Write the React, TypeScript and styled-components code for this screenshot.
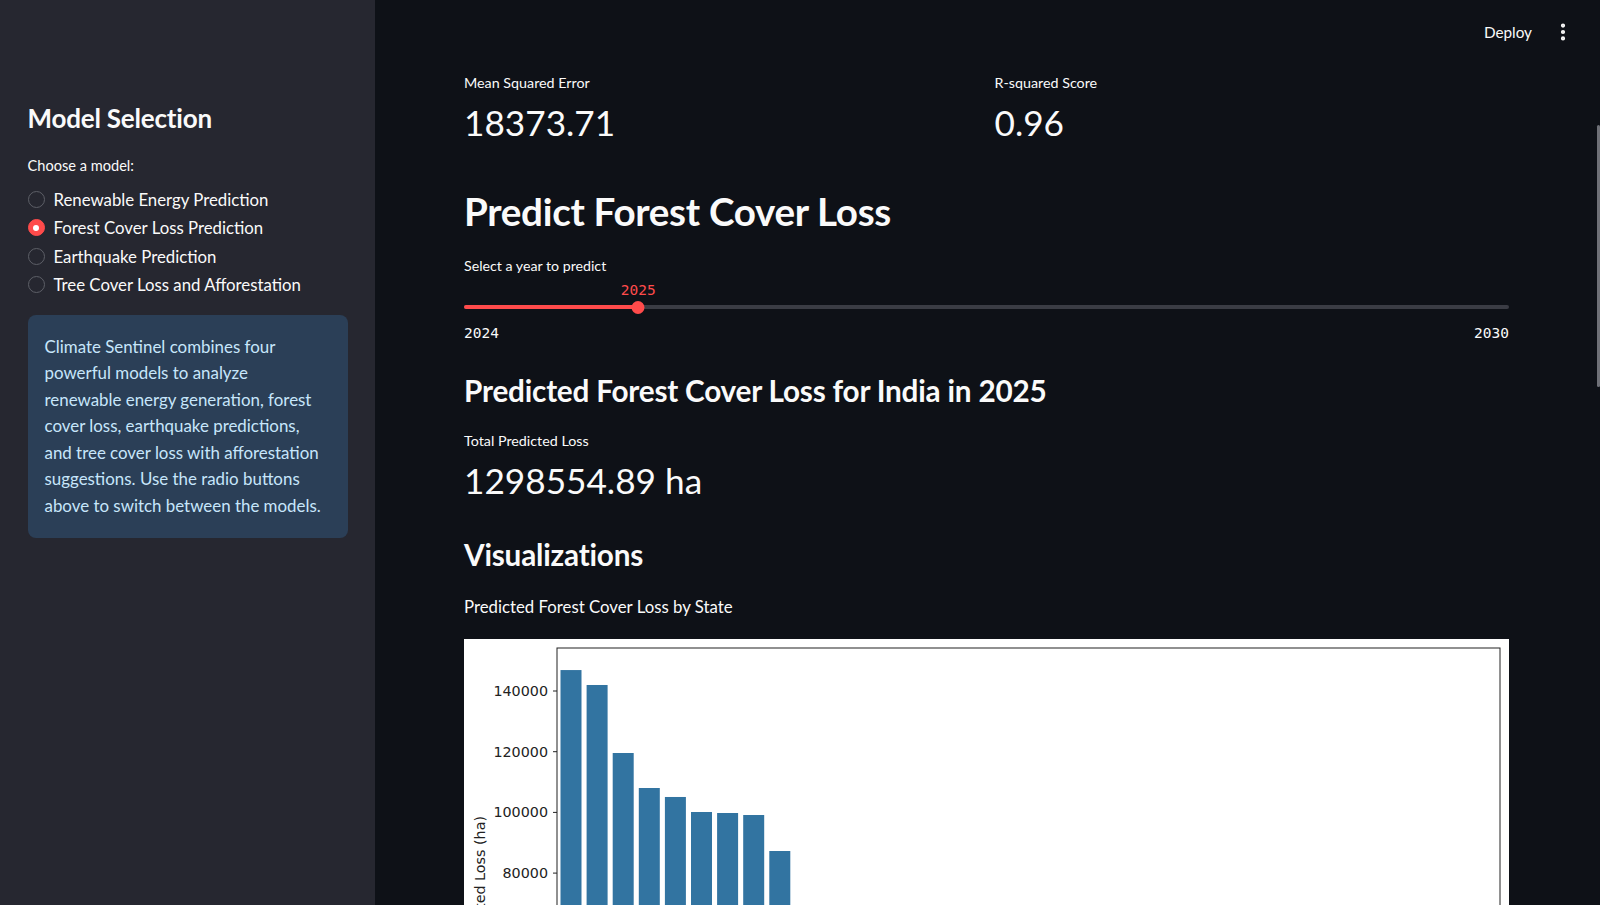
import React from 'react';
import styled, { createGlobalStyle } from 'styled-components';
import { EllipsisVertical } from 'lucide-react';

const GlobalStyle = createGlobalStyle`
  html, body {
    margin: 0;
    padding: 0;
    background: #0e1117;
    color: #fafafa;
    font-family: Lato, 'Open Sans', sans-serif;
  }
  * { box-sizing: border-box; }
`;

const models = [
  'Renewable Energy Prediction',
  'Forest Cover Loss Prediction',
  'Earthquake Prediction',
  'Tree Cover Loss and Afforestation',
];

const infoLines = [
  'Climate Sentinel combines four',
  'powerful models to analyze',
  'renewable energy generation, forest',
  'cover loss, earthquake predictions,',
  'and tree cover loss with afforestation',
  'suggestions. Use the radio buttons',
  'above to switch between the models.',
];

// predicted loss per state (ha), sorted desc
const stateLoss = [
  146900, 141980, 119570, 108040, 105080, 100130, 99800, 99140, 87280, 64200, 58100, 52400,
  47300, 41800, 36900, 31200, 26400, 21800, 17300, 13100, 9800, 6400, 3900, 2100,
];

const App = () => {
  const minYear = 2024;
  const maxYear = 2030;
  const year = 2025;
  const pct = ((year - minYear) / (maxYear - minYear)) * 100;

  return (
    <>
      <GlobalStyle />
      <Shell>
        <Sidebar>
          <SideTitle>Model Selection</SideTitle>
          <FieldLabel $size={14.6}>Choose a model:</FieldLabel>
          <RadioList>
            {models.map((m, i) => (
              <RadioRow key={m}>
                <RadioDot $checked={i === 1} />
                <span>{m}</span>
              </RadioRow>
            ))}
          </RadioList>
          <InfoBox>
            {infoLines.map((l) => (
              <div key={l}>{l}</div>
            ))}
          </InfoBox>
        </Sidebar>

        <Main>
          <TopBar>
            <DeployBtn>Deploy</DeployBtn>
            <MenuBtn>
              <EllipsisVertical size={22} strokeWidth={2.6} />
            </MenuBtn>
          </TopBar>
          <ScrollThumb />

          <Content>
            <MetricsRow>
              <Metric>
                <MetricLabel>Mean Squared Error</MetricLabel>
                <MetricValue>18373.71</MetricValue>
              </Metric>
              <Metric>
                <MetricLabel>R-squared Score</MetricLabel>
                <MetricValue>0.96</MetricValue>
              </Metric>
            </MetricsRow>

            <Title>Predict Forest Cover Loss</Title>

            <SliderBlock>
              <FieldLabel>Select a year to predict</FieldLabel>
              <SliderArea>
                <ThumbValue style={{ left: `${pct}%` }}>{year}</ThumbValue>
                <Track>
                  <TrackFill style={{ width: `${pct}%` }} />
                  <Thumb style={{ left: `${pct}%` }} />
                </Track>
                <TickRow>
                  <span>{minYear}</span>
                  <span>{maxYear}</span>
                </TickRow>
              </SliderArea>
            </SliderBlock>

            <Subtitle>Predicted Forest Cover Loss for India in {year}</Subtitle>
            <Metric $top={19}>
              <MetricLabel>Total Predicted Loss</MetricLabel>
              <MetricValue>1298554.89 ha</MetricValue>
            </Metric>

            <Subtitle $top={30}>Visualizations</Subtitle>
            <Caption>Predicted Forest Cover Loss by State</Caption>
            <ChartFrame>
              <BarChart data={stateLoss} />
            </ChartFrame>
          </Content>
        </Main>
      </Shell>
    </>
  );
};

const BarChart = ({ data }: { data: number[] }) => {
  const w = 1045;
  const h = 640;
  const ax = { left: 93, top: 9, right: 1036, bottom: 560 };
  const y = (v: number) => 52 + ((140000 - v) / 20000) * 60.7;
  const ticks = [140000, 120000, 100000, 80000, 60000, 40000, 20000, 0];
  return (
    <svg width="100%" viewBox={`0 0 ${w} ${h}`} style={{ display: 'block' }}>
      <rect x={0} y={0} width={w} height={h} fill="#ffffff" />
      {data.map((v, i) => {
        const x = 96.5 + i * 26.1;
        return <rect key={i} x={x} y={y(v)} width={21} height={ax.bottom - y(v)} fill="#3274a1" />;
      })}
      <rect
        x={ax.left}
        y={ax.top}
        width={ax.right - ax.left}
        height={ax.bottom - ax.top}
        fill="none"
        stroke="#222"
        strokeWidth={1}
      />
      {ticks.map((t) => (
        <g key={t}>
          <line x1={ax.left - 4} x2={ax.left} y1={y(t)} y2={y(t)} stroke="#222" strokeWidth={1} />
          <text
            x={ax.left - 9}
            y={y(t) + 5}
            textAnchor="end"
            fontFamily="'DejaVu Sans', sans-serif"
            fontSize={14.3}
            fill="#222"
          >
            {t}
          </text>
        </g>
      ))}
      <text
        transform="translate(21 177) rotate(-90)"
        textAnchor="end"
        fontFamily="'DejaVu Sans', sans-serif"
        fontSize={14.3}
        fill="#222"
      >
        Predicted Loss (ha)
      </text>
    </svg>
  );
};

export default App;

const Shell = styled.div`
  display: flex;
  height: 100vh;
  overflow: hidden;
`;

const Sidebar = styled.aside`
  width: 375px;
  flex-shrink: 0;
  background: #262730;
  padding: 100px 27px 0 27.5px;
  display: flex;
  flex-direction: column;
`;

const SideTitle = styled.h2`
  margin: 0 0 20px;
  font-size: 26px;
  line-height: 36px;
  font-weight: 700;
  letter-spacing: -0.2px;
`;

const FieldLabel = styled.div<{ $size?: number }>`
  font-size: ${(p) => p.$size ?? 14.2}px;
  line-height: 20px;
`;

const RadioList = styled.div`
  margin-top: 9px;
  display: flex;
  flex-direction: column;
`;

const RadioRow = styled.label`
  display: flex;
  align-items: center;
  gap: 9px;
  height: 28.5px;
  font-size: 16.8px;
`;

const RadioDot = styled.span<{ $checked?: boolean }>`
  width: 17px;
  height: 17px;
  border-radius: 50%;
  flex-shrink: 0;
  position: relative;
  border: 1.5px solid ${(p) => (p.$checked ? '#ff4b4b' : '#5d5f67')};
  background: ${(p) => (p.$checked ? '#ff4b4b' : 'transparent')};

  &::after {
    content: '';
    display: ${(p) => (p.$checked ? 'block' : 'none')};
    position: absolute;
    width: 6px;
    height: 6px;
    border-radius: 50%;
    background: #fff;
    top: 50%;
    left: 50%;
    transform: translate(-50%, -50%);
  }
`;

const InfoBox = styled.div`
  margin-top: 16px;
  background: #2b3f57;
  color: #c7e6fb;
  border-radius: 8px;
  padding: 18.5px 17px;
  font-size: 16.9px;
  line-height: 26.6px;
  white-space: nowrap;
`;

const Main = styled.main`
  flex: 1;
  position: relative;
  overflow: hidden;
  display: flex;
  flex-direction: column;
`;

const TopBar = styled.header`
  height: 64px;
  display: flex;
  align-items: center;
  justify-content: flex-end;
  gap: 20px;
  padding-right: 26px;
  flex-shrink: 0;
`;

const DeployBtn = styled.button`
  background: none;
  border: none;
  color: #fafafa;
  font-family: inherit;
  font-size: 15.3px;
  padding: 0;
  cursor: pointer;
`;

const MenuBtn = styled.button`
  background: none;
  border: none;
  color: #fafafa;
  padding: 0;
  display: flex;
  cursor: pointer;
`;

const ScrollThumb = styled.div`
  position: absolute;
  right: 0;
  top: 125px;
  width: 3px;
  height: 262px;
  border-radius: 2px;
  background: #6e7077;
`;

const Content = styled.div`
  padding: 9px 91px 0 89px;
  display: flex;
  flex-direction: column;
`;

const MetricsRow = styled.div`
  display: grid;
  grid-template-columns: 1fr 1fr;
  column-gap: 16px;
`;

const Metric = styled.div<{ $top?: number }>`
  display: flex;
  flex-direction: column;
  margin-top: ${(p) => p.$top ?? 0}px;
`;

const MetricLabel = styled.div`
  font-size: 14.3px;
  line-height: 20px;
  margin-bottom: 5px;
`;

const MetricValue = styled.div`
  font-size: 35.2px;
  line-height: 48px;
  font-weight: 400;
`;

const Title = styled.h1`
  margin: 39px 0 0;
  font-size: 38.6px;
  line-height: 52px;
  font-weight: 700;
  letter-spacing: -0.3px;
`;

const SliderBlock = styled.div`
  margin-top: 19px;
`;

const SliderArea = styled.div`
  margin-top: 5px;
  position: relative;
  padding-top: 18px;
`;

const ThumbValue = styled.span`
  position: absolute;
  top: 0;
  transform: translateX(-50%);
  font-family: 'DejaVu Sans Mono', 'Liberation Mono', monospace;
  font-size: 14.5px;
  line-height: 18px;
  color: #ff4b4b;
`;

const Track = styled.div`
  position: relative;
  height: 16px;
  display: flex;
  align-items: center;

  &::before {
    content: '';
    position: absolute;
    left: 0;
    right: 0;
    height: 4px;
    border-radius: 2px;
    background: #3a3c44;
  }
`;

const TrackFill = styled.div`
  position: relative;
  height: 4px;
  border-radius: 2px;
  background: #ff4b4b;
`;

const Thumb = styled.span`
  position: absolute;
  width: 13px;
  height: 13px;
  border-radius: 50%;
  background: #ff4b4b;
  transform: translateX(-50%);
`;

const TickRow = styled.div`
  margin-top: 9px;
  display: flex;
  justify-content: space-between;
  font-family: 'DejaVu Sans Mono', 'Liberation Mono', monospace;
  font-size: 14.5px;
  line-height: 18px;
`;

const Subtitle = styled.h2<{ $top?: number }>`
  margin: ${(p) => p.$top ?? 28}px 0 0;
  font-size: 29.7px;
  line-height: 42px;
  font-weight: 700;
  letter-spacing: -0.2px;
`;

const Caption = styled.div`
  margin-top: 19.5px;
  font-size: 16.8px;
  line-height: 22px;
`;

const ChartFrame = styled.div`
  margin-top: 21px;
  width: 100%;
`;
